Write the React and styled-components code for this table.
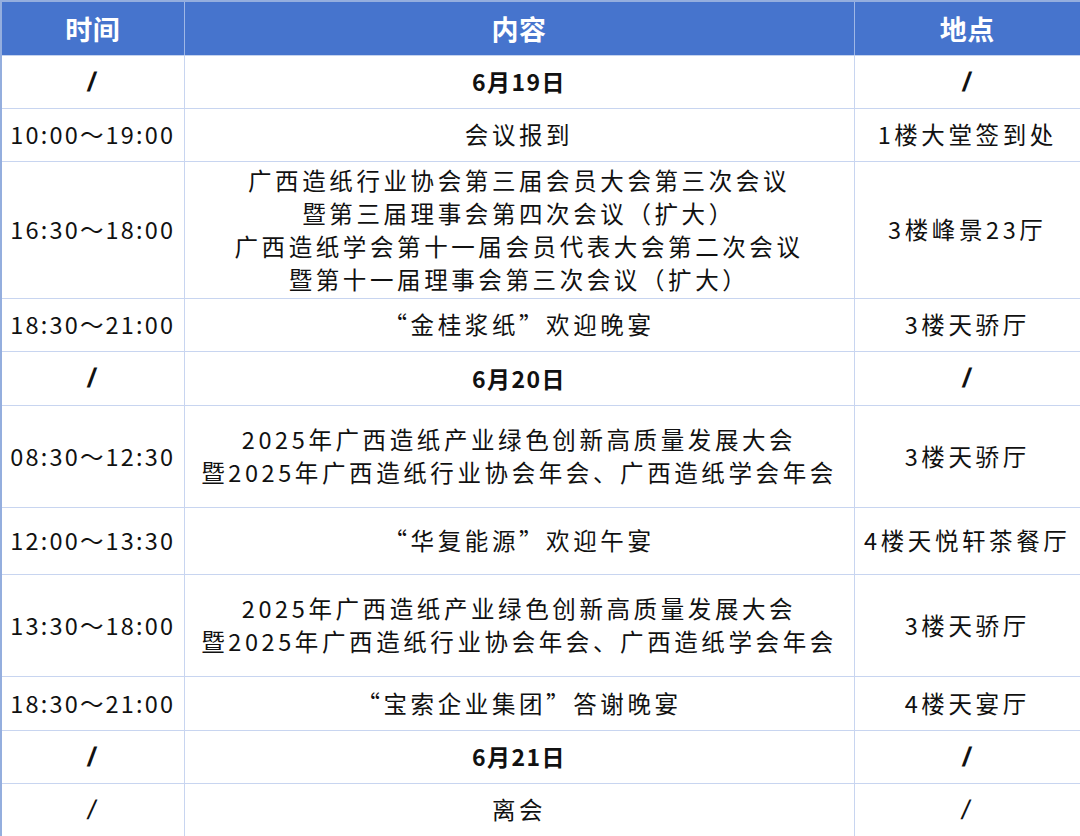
import React from "react";
import styled, { createGlobalStyle } from "styled-components";

const Global = createGlobalStyle`
  html, body { margin: 0; padding: 0; background: #ffffff; }
  body { font-family: "Noto Sans CJK SC", "Noto Sans", sans-serif; color: #111; }
`;

const Table = styled.table`
  width: 1080px;
  height: 836px;
  border-collapse: collapse;
  table-layout: fixed;
  border: 2px solid #94aede;
`;

const HeadCell = styled.th`
  background: #4674cd;
  color: #ffffff;
  font-size: 27px;
  font-weight: 700;
  height: 52px;
  padding: 0;
  border-left: 1px solid #9fb7e6;
  border-right: 1px solid #9fb7e6;
  border-bottom: 1px solid #c5d3ee;
  text-align: center;
  vertical-align: middle;
  letter-spacing: 0.5px;
`;

const Cell = styled.td`
  border: 1px solid #c8d5f0;
  padding: 0;
  text-align: center;
  vertical-align: middle;
  font-size: ${(p) => (p.$date ? "23px" : "23.5px")};
  font-weight: ${(p) => (p.$date ? 700 : 400)};
  letter-spacing: ${(p) => (p.$date ? "1.5px" : p.$time ? "2.2px" : "3.6px")};
  line-height: 33px;
  white-space: nowrap;
`;

const Slash = styled.span`
  font-family: "Liberation Sans", sans-serif;
  font-size: 27px;
  font-weight: ${(p) => (p.$bold ? 700 : 300)};
  transform: skewX(-10deg);
  display: inline-block;
`;

const Row = styled.tr`
  height: ${(p) => p.$h}px;
`;

const Line = styled.div`
  display: block;
`;

const rows = [
  { h: 53, date: true, time: "/", content: "6月19日", place: "/" },
  { h: 53, time: "10:00～19:00", content: ["会议报到"], place: "1楼大堂签到处" },
  {
    h: 137,
    time: "16:30～18:00",
    content: [
      "广西造纸行业协会第三届会员大会第三次会议",
      "暨第三届理事会第四次会议（扩大）",
      "广西造纸学会第十一届会员代表大会第二次会议",
      "暨第十一届理事会第三次会议（扩大）",
    ],
    place: "3楼峰景23厅",
  },
  { h: 53, time: "18:30～21:00", content: ["“金桂浆纸”欢迎晚宴"], place: "3楼天骄厅" },
  { h: 54, date: true, time: "/", content: "6月20日", place: "/" },
  {
    h: 102,
    time: "08:30～12:30",
    content: [
      "2025年广西造纸产业绿色创新高质量发展大会",
      "暨2025年广西造纸行业协会年会、广西造纸学会年会",
    ],
    place: "3楼天骄厅",
  },
  { h: 67, time: "12:00～13:30", content: ["“华复能源”欢迎午宴"], place: "4楼天悦轩茶餐厅" },
  {
    h: 102,
    time: "13:30～18:00",
    content: [
      "2025年广西造纸产业绿色创新高质量发展大会",
      "暨2025年广西造纸行业协会年会、广西造纸学会年会",
    ],
    place: "3楼天骄厅",
  },
  { h: 54, time: "18:30～21:00", content: ["“宝索企业集团”答谢晚宴"], place: "4楼天宴厅" },
  { h: 53, date: true, time: "/", content: "6月21日", place: "/" },
  { h: 54, time: "/", content: ["离会"], place: "/" },
];

function renderText(t, bold) {
  if (t === "/") return <Slash $bold={bold}>/</Slash>;
  return t;
}

export default function App() {
  return (
    <>
      <Global />
      <Table>
        <colgroup>
          <col style={{ width: "183px" }} />
          <col style={{ width: "670px" }} />
          <col style={{ width: "227px" }} />
        </colgroup>
        <thead>
          <Row $h={54}>
            <HeadCell>时间</HeadCell>
            <HeadCell>内容</HeadCell>
            <HeadCell>地点</HeadCell>
          </Row>
        </thead>
        <tbody>
          {rows.map((r, i) => (
            <Row key={i} $h={r.h}>
              <Cell $time $date={r.date}>{renderText(r.time, r.date)}</Cell>
              <Cell $date={r.date}>
                {r.date
                  ? r.content
                  : r.content.map((c, j) => <Line key={j}>{c}</Line>)}
              </Cell>
              <Cell $date={r.date}>{renderText(r.place, r.date)}</Cell>
            </Row>
          ))}
        </tbody>
      </Table>
    </>
  );
}
